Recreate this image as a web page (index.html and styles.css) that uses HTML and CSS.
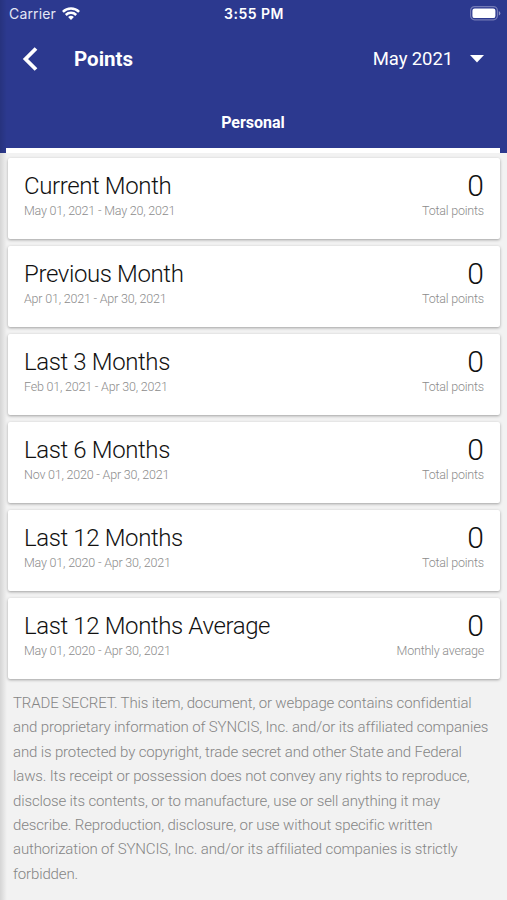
FILE: index.html
```html
<!DOCTYPE html>
<html lang="en">
<head>
<meta charset="utf-8">
<title>Points</title>
<link rel="stylesheet" href="styles.css">
</head>
<body>
<header class="header">
  <div class="status">
    <div class="carrier">
      <span>Carrier</span>
      <svg class="wifi" viewBox="0 0 18 13" width="18" height="13" fill="none" stroke="#fff" stroke-width="2.5"><path d="M.9 4.900a11.5 11.5 0 0 1 16.2 0M3.8 8a7.4 7.4 0 0 1 10.4 0"/><path d="M9 13 6.100 10.100a4.1 4.1 0 0 1 5.8 0Z" fill="#fff" stroke="none"/></svg>
    </div>
    <span class="time">3:55 PM</span>
    <svg class="battery" viewBox="0 0 31 15" width="31" height="15"><rect x=".6" y=".6" width="26.8" height="13.2" rx="4" fill="none" stroke="#737ab6" stroke-width="1.2"/><rect x="2.4" y="2.5" width="23" height="9.6" rx="2.2" fill="#fff"/><path d="M28.8 5v4.600q1.5-.7 1.500-2.300T28.800 5Z" fill="#8f95c6"/></svg>
  </div>
  <div class="toolbar">
    <svg class="back" viewBox="0 0 16 24" width="16" height="24" fill="none" stroke="#fff" stroke-width="3.8"><path d="M14 1.500 3.500 12l10.500 10.500"/></svg>
    <h1 class="heading">Points</h1>
    <span class="month">May 2021</span>
    <svg class="caret" viewBox="0 0 14 8" width="14" height="8"><path d="M0 0h14L7 7.500Z" fill="#fff"/></svg>
  </div>
  <nav class="tabs"><div class="tab">Personal</div></nav>
</header>
<main class="list">
  <section class="card"><div><h2 class="title">Current Month</h2><p class="sub">May 01, 2021 - May 20, 2021</p></div><div class="score"><p class="value">0</p><p class="sub">Total points</p></div></section>
  <section class="card"><div><h2 class="title">Previous Month</h2><p class="sub">Apr 01, 2021 - Apr 30, 2021</p></div><div class="score"><p class="value">0</p><p class="sub">Total points</p></div></section>
  <section class="card"><div><h2 class="title">Last 3 Months</h2><p class="sub">Feb 01, 2021 - Apr 30, 2021</p></div><div class="score"><p class="value">0</p><p class="sub">Total points</p></div></section>
  <section class="card"><div><h2 class="title">Last 6 Months</h2><p class="sub">Nov 01, 2020 - Apr 30, 2021</p></div><div class="score"><p class="value">0</p><p class="sub">Total points</p></div></section>
  <section class="card"><div><h2 class="title">Last 12 Months</h2><p class="sub">May 01, 2020 - Apr 30, 2021</p></div><div class="score"><p class="value">0</p><p class="sub">Total points</p></div></section>
  <section class="card"><div><h2 class="title">Last 12 Months Average</h2><p class="sub">May 01, 2020 - Apr 30, 2021</p></div><div class="score"><p class="value">0</p><p class="sub">Monthly average</p></div></section>
</main>
<footer class="notice">TRADE SECRET. This item, document, or webpage contains confidential<br>and proprietary information of SYNCIS, Inc. and/or its affiliated companies<br>and is protected by copyright, trade secret and other State and Federal<br>laws. Its receipt or possession does not convey any rights to reproduce,<br>disclose its contents, or to manufacture, use or sell anything it may<br>describe. Reproduction, disclosure, or use without specific written<br>authorization of SYNCIS, Inc. and/or its affiliated companies is strictly<br>forbidden.</footer>
</body>
</html>
```
FILE: styles.css
```css
* { box-sizing: border-box; margin: 0; padding: 0; }
body { height: 900px; overflow: hidden; background: #f2f2f2; font-family: Roboto, sans-serif; }
body::after { content: ""; position: absolute; left: 0; top: 0; width: 7px; height: 900px; background: linear-gradient(90deg, rgba(0,0,0,.12), rgba(0,0,0,0)); }
svg { display: block; flex: none; }
.header { height: 153px; background: #2c398f; color: #fff; }
.status { display: grid; grid-template-columns: 1fr auto 1fr; align-items: center; height: 27px; padding: 0 6px 0 9px; font-family: Inter, sans-serif; font-size: 14px; }
.carrier { display: flex; align-items: center; gap: 6px; color: #e4e6f5; letter-spacing: .15px; }
.time { margin-left: -2px; font-weight: 600; font-size: 14px; letter-spacing: .5px; }
.battery { justify-self: end; }
.toolbar { display: flex; align-items: center; height: 64px; padding: 0 23px 0 22px; }
.heading { margin-left: 36px; font-size: 20.5px; font-weight: 700; line-height: 24px; }
.month { margin-left: auto; font-size: 18.5px; line-height: 24px; letter-spacing: -.1px; }
.caret { margin-left: 17px; }
.tabs { height: 62px; padding: 0 7px 0 6px; }
.tab { height: 62px; padding-top: 1px; border-bottom: 5px solid #fff; text-align: center; font-size: 16px; font-weight: 700; line-height: 62px; }
.list { display: grid; gap: 7px; padding: 5px 7px 0 8px; }
.card { display: flex; justify-content: space-between; height: 81px; padding: 12px 16px 0; border-radius: 2px; background: #fff; box-shadow: 0 1px 3px rgba(0,0,0,.34); }
.title { height: 33px; font-size: 24px; font-weight: 300; line-height: 33px; letter-spacing: -.38px; color: #111; white-space: nowrap; }
.sub { font-size: 12.5px; font-weight: 300; line-height: 16px; letter-spacing: -.2px; color: #8c8c8c; white-space: nowrap; }
.score { text-align: right; }
.value { height: 33px; font-size: 30px; font-weight: 300; line-height: 32px; color: #111; }
.notice { padding: 12px 0 0 13px; font-size: 15px; font-weight: 300; line-height: 24.4px; letter-spacing: -.14px; color: #858585; white-space: nowrap; }
```
